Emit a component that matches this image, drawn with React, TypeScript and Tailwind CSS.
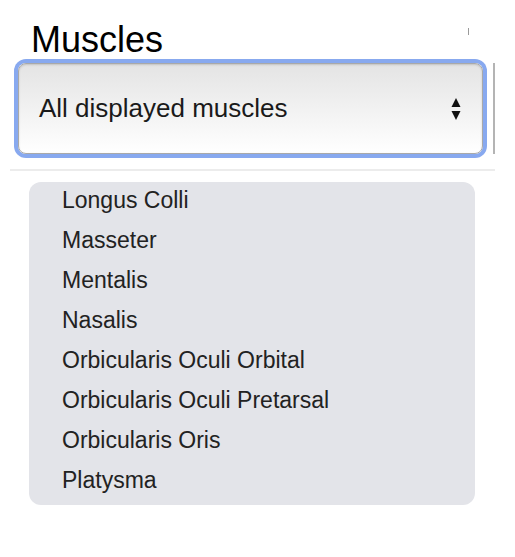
const muscles = [
  'Longus Colli',
  'Masseter',
  'Mentalis',
  'Nasalis',
  'Orbicularis Oculi Orbital',
  'Orbicularis Oculi Pretarsal',
  'Orbicularis Oris',
  'Platysma',
];

function UpDownArrows() {
  return (
    <svg width="10" height="24" viewBox="0 0 10 24" className="shrink-0">
      <path d="M5 1 L9.5 10 L0.5 10 Z" fill="#111" />
      <path d="M0.5 14 L9.5 14 L5 23 Z" fill="#111" />
    </svg>
  );
}

export default function App() {
  return (
    <div
      className="w-[515px] h-[557px] bg-white text-black"
      style={{ fontFamily: '"Liberation Sans", Arial, sans-serif' }}
    >
      <div className="flex items-start pt-[22px] pl-[31px]">
        <h1 className="text-[36px] leading-none text-black">Muscles</h1>
        <span className="ml-[305px] mt-[6px] w-px h-[7px] bg-[#9a9a9a]" />
      </div>

      <div className="flex items-center gap-[10px] pl-[18px] mt-[5px]">
        <div className="w-[465px] h-[91px] rounded-lg ring-4 ring-[#88a9ef] border border-[#a9a9a9] bg-gradient-to-b from-[#e4e4e4] to-white shadow-[inset_0_1px_2px_rgba(0,0,0,0.15)] flex items-center pl-[20px] pr-[21px]">
          <span className="flex-1 text-[26px] text-[#1a1a1a]">All displayed muscles</span>
          <UpDownArrows />
        </div>
        <div className="w-[2px] h-[91px] bg-[#b4b4b4]" />
      </div>

      <div className="ml-[10px] mt-[15px] w-[485px] h-[2px] bg-[#ececec]" />

      <div className="ml-[29px] mt-[11px] w-[446px] h-[323px] rounded-[12px] bg-[#e3e4e9] pl-[33px] flex flex-col gap-[4px]">
        {muscles.map((m) => (
          <div key={m} className="text-[23px] leading-[36px] text-[#222]">
            {m}
          </div>
        ))}
      </div>
    </div>
  );
}
